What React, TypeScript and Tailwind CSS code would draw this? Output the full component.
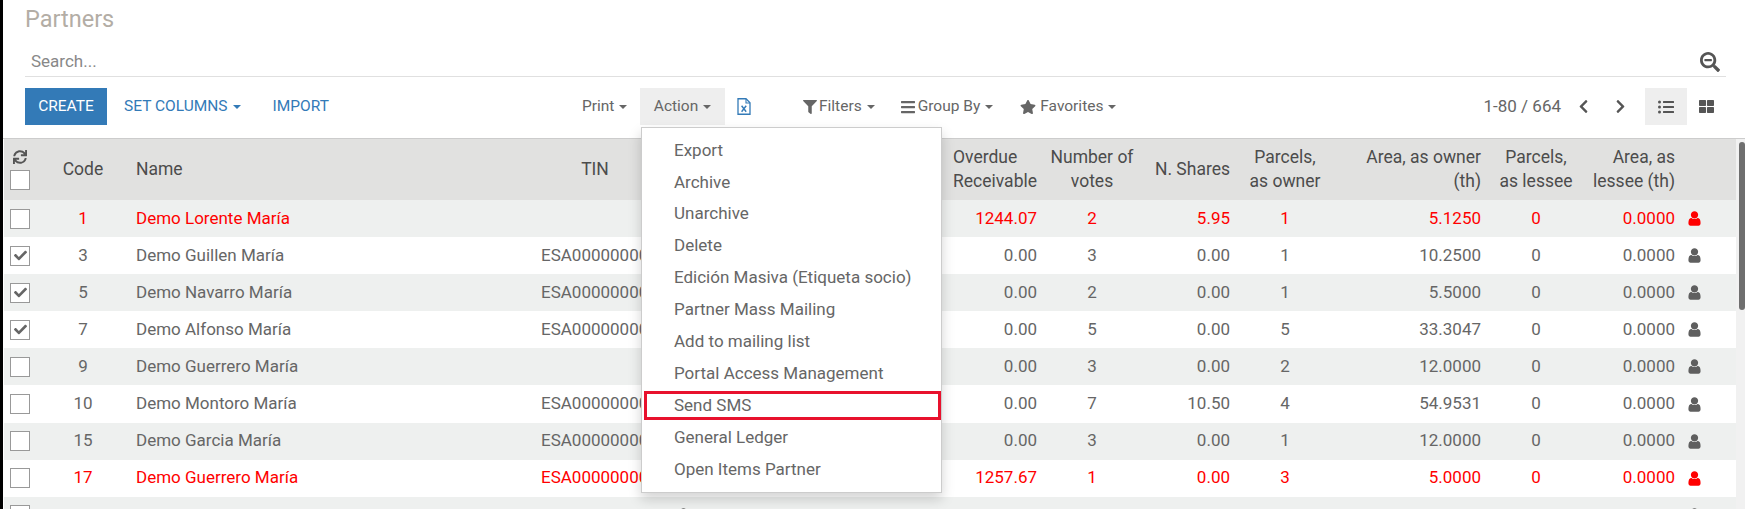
import React from 'react';
import {
  FaBars,
  FaCheck,
  FaChevronLeft,
  FaChevronRight,
  FaFilter,
  FaListUl,
  FaSearchMinus,
  FaStar,
  FaSync,
  FaThLarge,
} from 'react-icons/fa';

type Row = {
  code: string;
  name: string;
  tin?: string;
  overdue: string;
  votes: string;
  shares: string;
  parcels: string;
  area: string;
  red?: boolean;
  checked?: boolean;
};

const ROWS: Row[] = [
  { code: '1', name: 'Demo Lorente María', overdue: '1244.07', votes: '2', shares: '5.95', parcels: '1', area: '5.1250', red: true },
  { code: '3', name: 'Demo Guillen María', tin: 'ESA00000000A', overdue: '0.00', votes: '3', shares: '0.00', parcels: '1', area: '10.2500', checked: true },
  { code: '5', name: 'Demo Navarro María', tin: 'ESA00000000B', overdue: '0.00', votes: '2', shares: '0.00', parcels: '1', area: '5.5000', checked: true },
  { code: '7', name: 'Demo Alfonso María', tin: 'ESA00000000C', overdue: '0.00', votes: '5', shares: '0.00', parcels: '5', area: '33.3047', checked: true },
  { code: '9', name: 'Demo Guerrero María', overdue: '0.00', votes: '3', shares: '0.00', parcels: '2', area: '12.0000' },
  { code: '10', name: 'Demo Montoro María', tin: 'ESA00000000D', overdue: '0.00', votes: '7', shares: '10.50', parcels: '4', area: '54.9531' },
  { code: '15', name: 'Demo Garcia María', tin: 'ESA00000000E', overdue: '0.00', votes: '3', shares: '0.00', parcels: '1', area: '12.0000' },
  { code: '17', name: 'Demo Guerrero María', tin: 'ESA00000000F', overdue: '1257.67', votes: '1', shares: '0.00', parcels: '3', area: '5.0000', red: true },
];

const ACTIONS = [
  'Export',
  'Archive',
  'Unarchive',
  'Delete',
  'Edición Masiva (Etiqueta socio)',
  'Partner Mass Mailing',
  'Add to mailing list',
  'Portal Access Management',
  'Send SMS',
  'General Ledger',
  'Open Items Partner',
];

const GRID = 'grid grid-cols-[34px_90px_405px_124px_52px_236px_100px_94px_99px_94px_157px_94px_100px_52px]';

const Caret = ({ className = 'border-t-[#666]' }: { className?: string }) => (
  <span className={`inline-block w-0 h-0 border-x-[4px] border-t-[4px] border-x-transparent ${className}`} />
);

const PersonIcon = ({ className }: { className?: string }) => (
  <svg viewBox="0 0 1792 1792" width="17" height="17" fill="currentColor" className={className}>
    <path d="M1536 1399q0 109-62.5 187t-150.5 78h-854q-88 0-150.5-78t-62.5-187q0-85 8.5-160.5t31.5-152 58.5-131 94-89 134.5-34.5q131 128 313 128t313-128q76 0 134.5 34.5t94 89 58.5 131 31.5 152 8.5 160.5zm-256-887q0 159-112.5 271.5t-271.5 112.5-271.5-112.5-112.5-271.5 112.5-271.5 271.5-112.5 271.5 112.5 112.5 271.5z" />
  </svg>
);

const ExcelIcon = () => (
  <svg viewBox="0 0 14 17" width="14" height="17" fill="none" stroke="#337ab7">
    <path d="M1 .75h8l4 4v11.5H1z" strokeWidth="1.3" />
    <path d="M9 1v4h4" strokeWidth="1.1" />
    <path d="M4.6 7.8l4.6 6M9.2 7.8l-4.6 6" strokeWidth="1.4" />
  </svg>
);

const Checkbox = ({ checked }: { checked?: boolean }) => (
  <span className="flex items-center justify-center w-5 h-5 bg-white border border-[#999] text-[#666]">
    {checked && <FaCheck size={13} />}
  </span>
);

const TableRow = ({ row, index }: { row: Row; index: number }) => (
  <div
    className={`${GRID} h-[37.1px] items-center ${index % 2 === 0 ? 'bg-[#eef0ef]' : 'bg-white'} ${
      row.red ? 'text-[#ff0000]' : 'text-[#666]'
    }`}
  >
    <div className="pl-[6px]">
      <Checkbox checked={row.checked} />
    </div>
    <div className="text-center">{row.code}</div>
    <div className="pl-2">{row.name}</div>
    <div className="pl-2 whitespace-nowrap">{row.tin}</div>
    <div />
    <div />
    <div className="pr-2 text-right">{row.overdue}</div>
    <div className="text-center">{row.votes}</div>
    <div className="pr-2 text-right">{row.shares}</div>
    <div className="text-center">{row.parcels}</div>
    <div className="pr-2 text-right">{row.area}</div>
    <div className="text-center">0</div>
    <div className="pr-2 text-right">0.0000</div>
    <div className="pl-[3px]">
      <PersonIcon className={row.red ? 'text-[#ff0000]' : 'text-[#5f5f5f]'} />
    </div>
  </div>
);

const App: React.FC = () => {
  return (
    <div className="flex h-[509px] overflow-hidden bg-white font-['Roboto',sans-serif] text-[17px] text-[#666]">
      <div className="w-[3px] shrink-0 bg-black" />

      <div className="flex-1 min-w-0 flex flex-col">
        <div className="pl-[22px] pr-[19px]">
          <div className="h-[40px] flex items-center text-[23.5px] text-[#b3ada5]">Partners</div>

          <div className="h-[37px] flex items-center justify-between border-b border-[#e0e0e0] pt-[7px] pl-[6px] pr-[6px]">
            <span className="text-[#888]">Search...</span>
            <FaSearchMinus size={20} className="text-[#555]" />
          </div>

          <div className="mt-[11px] h-[37px] flex items-center text-[15.5px]">
            <div className="w-[547px] h-full flex items-center shrink-0">
              <button className="w-[82px] h-full bg-[#337ab7] text-white">CREATE</button>
              <button className="ml-[17px] flex items-center gap-[5px] text-[#337ab7]">
                SET COLUMNS <Caret className="border-t-[#337ab7]" />
              </button>
              <button className="ml-[32px] text-[#337ab7]">IMPORT</button>
            </div>

            <button className="w-[68px] pl-[10px] flex items-center gap-[5px] shrink-0">
              Print <Caret />
            </button>

            <div className="relative h-full">
              <button className="w-[85px] h-full flex items-center justify-center gap-[5px] bg-[#eee]">
                Action <Caret />
              </button>
              <div className="absolute z-10 left-px top-[39px] w-[301px] pt-[6px] pb-[7px] bg-white border border-[#ccc] text-[17px] shadow-[0_6px_12px_rgba(0,0,0,0.175)]">
                {ACTIONS.map((label) => (
                  <div key={label} className="relative h-[31.9px] flex items-center pl-[32px] pt-px whitespace-nowrap">
                    {label}
                    {label === 'Send SMS' && (
                      <span className="absolute left-[2px] right-0 top-[2px] bottom-px border-[3px] border-[#e8112d]" />
                    )}
                  </div>
                ))}
              </div>
            </div>

            <span className="ml-[12px]">
              <ExcelIcon />
            </span>

            <button className="ml-[52px] flex items-center">
              <FaFilter size={14} className="mr-[2px]" />
              Filters
              <Caret className="ml-[5px] border-t-[#666]" />
            </button>
            <button className="ml-[25px] flex items-center">
              <FaBars size={16} className="mr-[2px]" />
              Group By
              <Caret className="ml-[5px] border-t-[#666]" />
            </button>
            <button className="ml-[27px] flex items-center">
              <FaStar size={16} className="mr-[4px]" />
              Favorites
              <Caret className="ml-[5px] border-t-[#666]" />
            </button>

            <span className="ml-auto text-[17px]">1-80 / 664</span>
            <FaChevronLeft size={15} className="ml-[15px] text-[#555]" />
            <FaChevronRight size={15} className="ml-[22px] mr-[17px] text-[#555]" />
            <span className="w-[42px] h-full flex items-center justify-center bg-[#eee] text-[#555]">
              <FaListUl size={16} />
            </span>
            <span className="w-[39px] h-full flex items-center justify-center text-[#555]">
              <FaThLarge size={15} />
            </span>
          </div>
        </div>

        <div className="mt-[13px] flex-1 min-h-0 flex border-t border-[#ccc]">
          <div className="pl-px w-[1733px] shrink-0">
            <div className={`${GRID} h-[61px] pb-[2px] items-center bg-[#e1e1e0] text-[#4c4c4c] text-[17.5px] leading-[24px]`}>
              <div className="mt-[2px] pl-[6px] flex flex-col items-start gap-[6px]">
                <FaSync size={14} className="ml-[3px] text-[#555]" />
                <Checkbox />
              </div>
              <div className="text-center">Code</div>
              <div className="pl-2">Name</div>
              <div className="text-center">TIN</div>
              <div />
              <div />
              <div className="pr-2 flex justify-end">
                <div>Overdue<br />Receivable</div>
              </div>
              <div className="text-center">Number of<br />votes</div>
              <div className="pr-2 text-right">N. Shares</div>
              <div className="text-center">Parcels,<br />as owner</div>
              <div className="pr-2 text-right">Area, as owner<br />(th)</div>
              <div className="text-center">Parcels,<br />as lessee</div>
              <div className="pr-2 text-right">Area, as<br />lessee (th)</div>
              <div />
            </div>

            {ROWS.map((row, i) => (
              <TableRow key={row.code} row={row} index={i} />
            ))}

            <div className={`${GRID} h-[37px] items-center bg-[#eef0ef]`}>
              <div className="pl-[6px]">
                <Checkbox />
              </div>
              <div />
              <div />
              <div />
              <div className="flex justify-center">
                <PersonIcon className="text-[#5f5f5f]" />
              </div>
              <div />
              <div />
              <div />
              <div />
              <div />
              <div />
              <div />
              <div />
              <div className="pl-[3px]">
                <PersonIcon className="text-[#5f5f5f]" />
              </div>
            </div>
          </div>

          <div className="flex-1 bg-[#f1f1f1] pt-[3px] pl-[3px]">
            <div className="w-[6px] h-[168px] rounded-full bg-[#6f6f6f]" />
          </div>
        </div>
      </div>
    </div>
  );
};

export default App;
